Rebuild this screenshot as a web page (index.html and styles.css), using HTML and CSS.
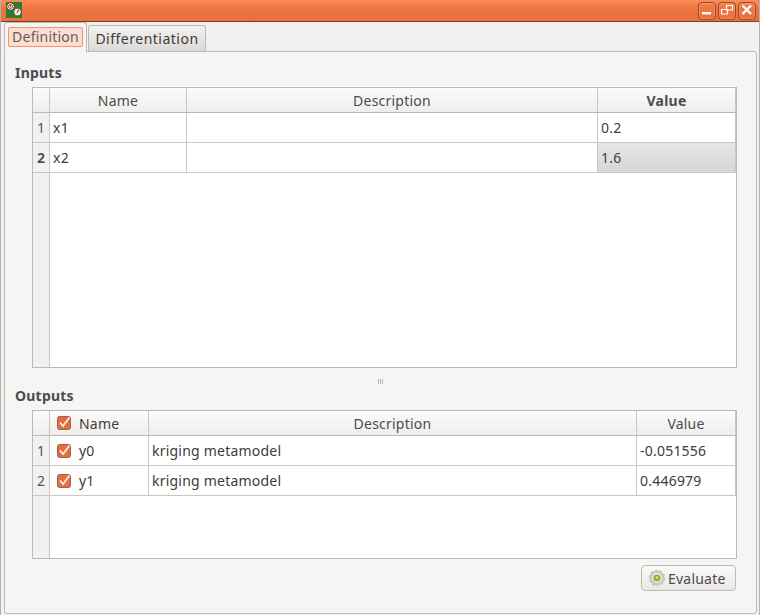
FILE: index.html
```html
<!DOCTYPE html>
<html>
<head>
<meta charset="utf-8">
<title>Definition</title>
<link rel="stylesheet" href="styles.css">
</head>
<body>
<div class="window">
  <header class="titlebar">
    <svg class="logo" width="16" height="16" viewBox="0 0 16 16"><rect width="16" height="16" fill="#2f7d2c"/><circle cx="4.500" cy="4.500" r="3.800" fill="#f4f1ea" stroke="#26401f" stroke-width=".8"/><circle cx="4.500" cy="4.500" r="2" fill="none" stroke="#c8321e" stroke-width=".9"/><path d="M4.500 2.500V5" stroke="#c8321e" stroke-width="1.100"/><circle cx="11.500" cy="10" r="3.900" fill="#f4f1ea" stroke="#26401f" stroke-width=".8"/><path d="M11 11L13 7.500" stroke="#c8321e" stroke-width="1.200"/></svg>
    <div class="wm">
      <span class="wm-btn"><svg width="18" height="17" viewBox="0 0 18 17"><rect x="4" y="10" width="9" height="2.400" fill="#fff"/></svg></span>
      <span class="wm-btn"><svg width="18" height="17" viewBox="0 0 18 17"><path d="M8.500 3.500h6v4.500h-6zM3.500 7.500h6v4.500h-6z" fill="none" stroke="#fff" stroke-width="1.200"/></svg></span>
      <span class="wm-btn"><svg width="18" height="17" viewBox="0 0 18 17"><path d="M4.500 3.500L13 12M13 3.500L4.500 12" stroke="#fff" stroke-width="2.400"/></svg></span>
    </div>
  </header>
  <nav class="tabs">
    <div class="tab tab-active"><span class="tab-focus">Definition</span></div>
    <div class="tab tab-idle">Differentiation</div>
  </nav>
  <main class="pane">
    <h2 class="group-title">Inputs</h2>
    <section class="table inputs">
      <div class="row head">
        <div class="gut"></div><div class="c ctr">Name</div><div class="c ctr">Description</div><div class="c ctr bold last">Value</div>
      </div>
      <div class="row body">
        <div class="gut">1</div><div class="c">x1</div><div class="c"></div><div class="c last">0.2</div>
      </div>
      <div class="row body">
        <div class="gut bold">2</div><div class="c">x2</div><div class="c"></div><div class="c last sel">1.6</div>
      </div>
      <div class="filler"><div class="gut"></div><div class="blank"></div></div>
    </section>
    <div class="splitter"><i></i><i></i><i></i></div>
    <h2 class="group-title">Outputs</h2>
    <section class="table outputs">
      <div class="row head">
        <div class="gut"></div>
        <div class="c"><svg class="chk" width="16" height="16" viewBox="0 0 16 16"><rect x="1.500" y="1.500" width="13" height="13" rx="2" fill="#e96a3c" stroke="#8f6a52"/><path d="M4 7.500L7 11L13.500 2.500" fill="none" stroke="#fdf0e8" stroke-width="1.800"/></svg><span>Name</span></div>
        <div class="c ctr">Description</div><div class="c ctr last">Value</div>
      </div>
      <div class="row body">
        <div class="gut">1</div>
        <div class="c"><svg class="chk" width="16" height="16" viewBox="0 0 16 16"><rect x="1.500" y="1.500" width="13" height="13" rx="2" fill="#e96a3c" stroke="#8f6a52"/><path d="M4 7.500L7 11L13.500 2.500" fill="none" stroke="#fdf0e8" stroke-width="1.800"/></svg><span>y0</span></div>
        <div class="c">kriging metamodel</div><div class="c last">-0.051556</div>
      </div>
      <div class="row body">
        <div class="gut">2</div>
        <div class="c"><svg class="chk" width="16" height="16" viewBox="0 0 16 16"><rect x="1.500" y="1.500" width="13" height="13" rx="2" fill="#e96a3c" stroke="#8f6a52"/><path d="M4 7.500L7 11L13.500 2.500" fill="none" stroke="#fdf0e8" stroke-width="1.800"/></svg><span>y1</span></div>
        <div class="c">kriging metamodel</div><div class="c last">0.446979</div>
      </div>
      <div class="filler"><div class="gut"></div><div class="blank"></div></div>
    </section>
    <div class="actions">
      <button class="btn"><svg width="18" height="18" viewBox="0 0 18 18"><circle cx="9" cy="9" r="6.200" fill="none" stroke="#c9c8c4" stroke-width="2.600"/><circle cx="9" cy="9" r="7.600" fill="none" stroke="#c9c8c4" stroke-width="1.600" stroke-dasharray="2.400 2.400"/><circle cx="9" cy="9" r="3.600" fill="#8db52e"/><circle cx="9" cy="8.500" r="1.500" fill="#c3df68"/></svg>Evaluate</button>
    </div>
  </main>
</div>
</body>
</html>
```
FILE: styles.css
```css
* { box-sizing: border-box; }
html, body { margin: 0; padding: 0; }
body { font-family: "Noto Sans", "Open Sans", sans-serif; font-size: 14px; letter-spacing: .22px; color: #3c3c3c; background: #f2f1f0; }
.window { width: 760px; height: 615px; display: flex; flex-direction: column; overflow: hidden; border-left: 1px solid #b5b2ac; border-right: 1px solid #b5b2ac; }
.titlebar { height: 22px; flex: none; margin: 0 -1px; padding: 2px 4px 0 6px; display: flex; justify-content: space-between; align-items: flex-start; background: linear-gradient(#fd8d5a, #ee7541 40%, #e96f3d); border-bottom: 1px solid #7a3f22; }
.logo { display: block; }
.wm { display: flex; gap: 2px; }
.wm-btn { width: 18px; height: 18px; border: 1px solid #93492a; border-radius: 4px; display: block; box-shadow: inset 0 0 0 1px rgba(255,190,150,.35); }
.wm-btn svg { display: block; margin: -1px; }
.tabs { height: 29px; flex: none; display: flex; align-items: flex-end; padding-left: 3px; gap: 1px; }
.tab { border: 1px solid #bdbab5; border-bottom: 0; border-radius: 3px 3px 0 0; }
.tab-active { height: 30px; width: 83px; margin-bottom: -1px; padding: 4px 3px; background: #f5f5f5; position: relative; z-index: 1; }
.tab-focus { display: block; height: 20px; line-height: 18px; text-align: center; color: #6b5a50; background: #fbdfd3; border: 1px solid #f0946c; border-radius: 2px; }
.tab-idle { height: 26px; width: 118px; line-height: 25px; text-align: center; letter-spacing: .5px; background: linear-gradient(#f3f2f1, #dbdad8); }
.pane { flex: 1; margin: 0 2px 1px 3px; background: #f5f5f5; border: 1px solid #bdbab5; border-radius: 3px; padding: 11px 19px 0 27px; display: flex; flex-direction: column; }
.group-title { margin: 0 0 0 -17px; font-size: 14px; line-height: 19px; font-weight: 700; color: #4c4c4c; }
.inputs { margin-top: 5px; height: 281px; --cols: 137px 411px 1fr; }
.outputs { margin-top: 5px; height: 149px; --cols: 99px 488px 1fr; }
.table { width: 705px; flex: none; border: 1px solid #bdbab5; display: flex; flex-direction: column; background: #fff; }
.row { display: grid; grid-template-columns: 17px var(--cols); flex: none; }
.head { height: 25px; background: linear-gradient(#fbfbfa, #efeeed); border-bottom: 1px solid #bdbab5; }
.body { height: 30px; border-bottom: 1px solid #c9c7c3; }
.gut { width: 17px; background: #f2f1f0; border-right: 1px solid #c9c7c3; display: flex; align-items: center; justify-content: center; color: #555; }
.head .gut { background: none; }
.c { display: flex; align-items: center; padding-left: 3px; border-right: 1px solid #c9c7c3; min-width: 0; white-space: nowrap; }
.ctr { justify-content: center; padding-left: 0; color: #4c4c4c; }
.bold { font-weight: 700; }
.sel { background: linear-gradient(#e6e5e3, #d8d7d5); }
.filler { flex: 1; display: flex; min-height: 0; }
.blank { flex: 1; background: #fff; }
.chk { flex: none; margin: 0 7px 0 3px; }
.splitter { height: 18px; padding-top: 8px; flex: none; margin: 0 -19px 0 -27px; display: flex; justify-content: center; align-items: center; gap: 1px; }
.splitter i { width: 1px; height: 5px; background: #bdbab5; }
.actions { display: flex; justify-content: flex-end; margin-top: 6px; }
.btn { width: 95px; height: 26px; margin-right: 1px; padding: 0 0 0 6px; display: flex; align-items: center; gap: 2px; font: inherit; letter-spacing: inherit; color: #4c4c4c; background: linear-gradient(#fafaf9, #e9e8e6); border: 1px solid #bdbab5; border-radius: 4px; }
```
